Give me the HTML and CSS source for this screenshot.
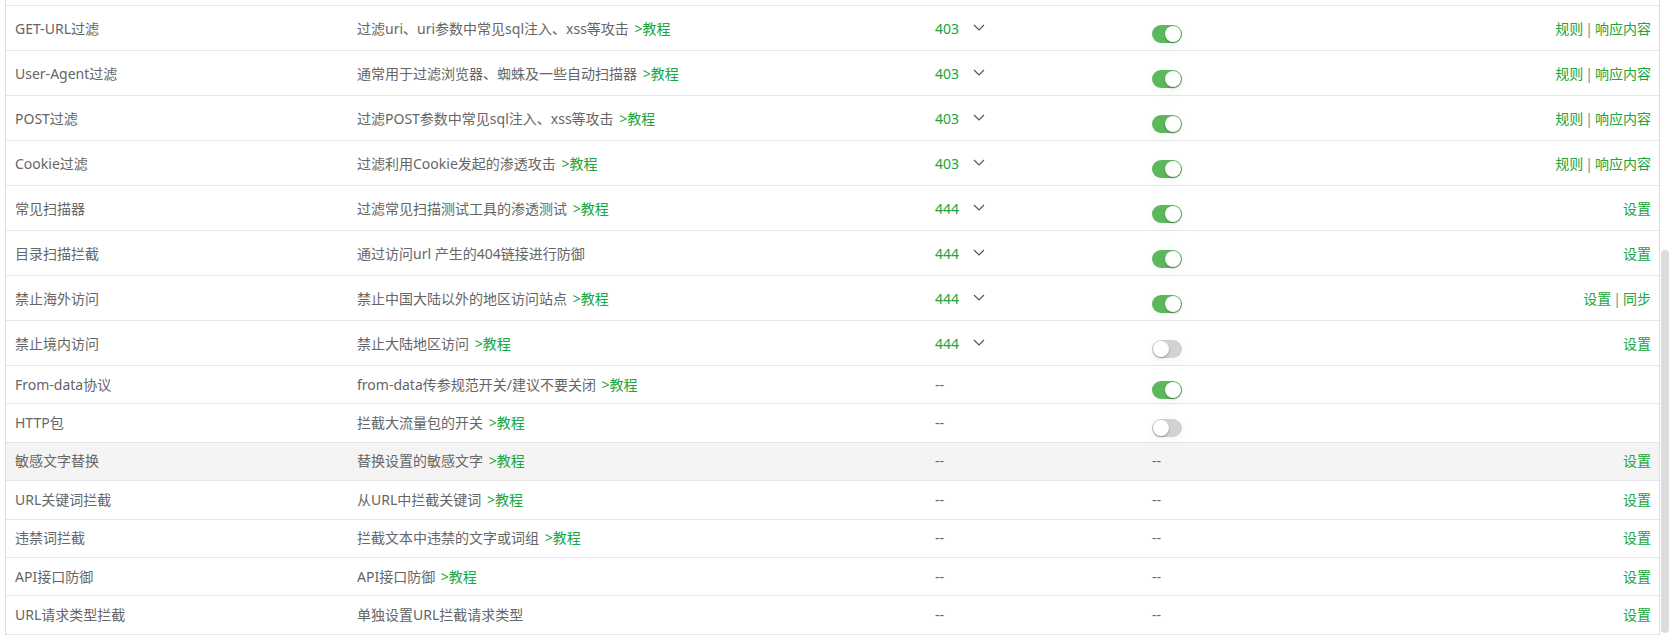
FILE: index.html
```html
<!DOCTYPE html>
<html lang="zh-CN">
<head>
  <meta charset="UTF-8">
  <title>网站防火墙 - 全局配置</title>
  <link rel="stylesheet" href="styles.css">
</head>
<body>
  <div class="page">
    <div class="table">
      <div class="row stub"></div>

      <div class="row tall">
        <div class="cell name">GET-URL过滤</div>
        <div class="cell desc">过滤uri、uri参数中常见sql注入、xss等攻击 <a class="btlink">&gt;教程</a></div>
        <div class="cell code"><span class="status">403</span><svg class="caret" viewBox="0 0 12 7" width="12" height="7"><polyline points="1,1 6,6 11,1"/></svg></div>
        <div class="cell state"><span class="switch on"></span></div>
        <div class="cell ops"><a class="btlink">规则</a><span class="sep">|</span><a class="btlink">响应内容</a></div>
      </div>

      <div class="row tall">
        <div class="cell name">User-Agent过滤</div>
        <div class="cell desc">通常用于过滤浏览器、蜘蛛及一些自动扫描器 <a class="btlink">&gt;教程</a></div>
        <div class="cell code"><span class="status">403</span><svg class="caret" viewBox="0 0 12 7" width="12" height="7"><polyline points="1,1 6,6 11,1"/></svg></div>
        <div class="cell state"><span class="switch on"></span></div>
        <div class="cell ops"><a class="btlink">规则</a><span class="sep">|</span><a class="btlink">响应内容</a></div>
      </div>

      <div class="row tall">
        <div class="cell name">POST过滤</div>
        <div class="cell desc">过滤POST参数中常见sql注入、xss等攻击 <a class="btlink">&gt;教程</a></div>
        <div class="cell code"><span class="status">403</span><svg class="caret" viewBox="0 0 12 7" width="12" height="7"><polyline points="1,1 6,6 11,1"/></svg></div>
        <div class="cell state"><span class="switch on"></span></div>
        <div class="cell ops"><a class="btlink">规则</a><span class="sep">|</span><a class="btlink">响应内容</a></div>
      </div>

      <div class="row tall">
        <div class="cell name">Cookie过滤</div>
        <div class="cell desc">过滤利用Cookie发起的渗透攻击 <a class="btlink">&gt;教程</a></div>
        <div class="cell code"><span class="status">403</span><svg class="caret" viewBox="0 0 12 7" width="12" height="7"><polyline points="1,1 6,6 11,1"/></svg></div>
        <div class="cell state"><span class="switch on"></span></div>
        <div class="cell ops"><a class="btlink">规则</a><span class="sep">|</span><a class="btlink">响应内容</a></div>
      </div>

      <div class="row tall">
        <div class="cell name">常见扫描器</div>
        <div class="cell desc">过滤常见扫描测试工具的渗透测试 <a class="btlink">&gt;教程</a></div>
        <div class="cell code"><span class="status">444</span><svg class="caret" viewBox="0 0 12 7" width="12" height="7"><polyline points="1,1 6,6 11,1"/></svg></div>
        <div class="cell state"><span class="switch on"></span></div>
        <div class="cell ops"><a class="btlink">设置</a></div>
      </div>

      <div class="row tall">
        <div class="cell name">目录扫描拦截</div>
        <div class="cell desc">通过访问url 产生的404链接进行防御</div>
        <div class="cell code"><span class="status">444</span><svg class="caret" viewBox="0 0 12 7" width="12" height="7"><polyline points="1,1 6,6 11,1"/></svg></div>
        <div class="cell state"><span class="switch on"></span></div>
        <div class="cell ops"><a class="btlink">设置</a></div>
      </div>

      <div class="row tall">
        <div class="cell name">禁止海外访问</div>
        <div class="cell desc">禁止中国大陆以外的地区访问站点 <a class="btlink">&gt;教程</a></div>
        <div class="cell code"><span class="status">444</span><svg class="caret" viewBox="0 0 12 7" width="12" height="7"><polyline points="1,1 6,6 11,1"/></svg></div>
        <div class="cell state"><span class="switch on"></span></div>
        <div class="cell ops"><a class="btlink">设置</a><span class="sep">|</span><a class="btlink">同步</a></div>
      </div>

      <div class="row tall">
        <div class="cell name">禁止境内访问</div>
        <div class="cell desc">禁止大陆地区访问 <a class="btlink">&gt;教程</a></div>
        <div class="cell code"><span class="status">444</span><svg class="caret" viewBox="0 0 12 7" width="12" height="7"><polyline points="1,1 6,6 11,1"/></svg></div>
        <div class="cell state"><span class="switch"></span></div>
        <div class="cell ops"><a class="btlink">设置</a></div>
      </div>

      <div class="row">
        <div class="cell name">From-data协议</div>
        <div class="cell desc">from-data传参规范开关/建议不要关闭 <a class="btlink">&gt;教程</a></div>
        <div class="cell code">--</div>
        <div class="cell state"><span class="switch on"></span></div>
        <div class="cell ops"></div>
      </div>

      <div class="row">
        <div class="cell name">HTTP包</div>
        <div class="cell desc">拦截大流量包的开关 <a class="btlink">&gt;教程</a></div>
        <div class="cell code">--</div>
        <div class="cell state"><span class="switch"></span></div>
        <div class="cell ops"></div>
      </div>

      <div class="row hover">
        <div class="cell name">敏感文字替换</div>
        <div class="cell desc">替换设置的敏感文字 <a class="btlink">&gt;教程</a></div>
        <div class="cell code">--</div>
        <div class="cell state">--</div>
        <div class="cell ops"><a class="btlink">设置</a></div>
      </div>

      <div class="row">
        <div class="cell name">URL关键词拦截</div>
        <div class="cell desc">从URL中拦截关键词 <a class="btlink">&gt;教程</a></div>
        <div class="cell code">--</div>
        <div class="cell state">--</div>
        <div class="cell ops"><a class="btlink">设置</a></div>
      </div>

      <div class="row">
        <div class="cell name">违禁词拦截</div>
        <div class="cell desc">拦截文本中违禁的文字或词组 <a class="btlink">&gt;教程</a></div>
        <div class="cell code">--</div>
        <div class="cell state">--</div>
        <div class="cell ops"><a class="btlink">设置</a></div>
      </div>

      <div class="row">
        <div class="cell name">API接口防御</div>
        <div class="cell desc">API接口防御 <a class="btlink">&gt;教程</a></div>
        <div class="cell code">--</div>
        <div class="cell state">--</div>
        <div class="cell ops"><a class="btlink">设置</a></div>
      </div>

      <div class="row">
        <div class="cell name">URL请求类型拦截</div>
        <div class="cell desc">单独设置URL拦截请求类型</div>
        <div class="cell code">--</div>
        <div class="cell state">--</div>
        <div class="cell ops"><a class="btlink">设置</a></div>
      </div>
    </div>

    <div class="scrollbar">
      <div class="thumb"></div>
    </div>
  </div>
</body>
</html>
```

FILE: styles.css
```css
html, body {
  margin: 0;
  padding: 0;
  background: #fff;
  overflow: hidden;
}

body {
  font-family: "Noto Sans", "Noto Sans CJK SC", sans-serif;
  font-size: 14px;
  line-height: 20px;
  color: #666;
}

.page {
  display: flex;
  align-items: flex-start;
  padding-left: 5px;
  height: 643px;
}

.table {
  width: 1655px;
  box-sizing: border-box;
  border-left: 1px solid #ddd;
  border-right: 1px solid #ddd;
}

.row {
  display: grid;
  grid-template-columns: 341px 578px 217px 258px 1fr;
  align-items: center;
  height: 38.4px;
  box-sizing: border-box;
  border-bottom: 1px solid #e6e6e6;
}

.row.stub {
  height: 6px;
}

.row.tall {
  height: 45px;
  padding-top: 1px;
}

.row.hover {
  background: #f4f4f4;
}

.cell {
  padding-left: 10px;
  white-space: nowrap;
}

.cell.name {
  padding-left: 9px;
}

.cell.desc .btlink {
  margin-left: 2px;
}

.cell.code {
  display: flex;
  align-items: center;
}

.cell.ops {
  text-align: right;
  padding-right: 8px;
}

.sep {
  margin: 0 2px;
  color: #888;
}

.btlink {
  color: #20a53a;
  text-decoration: none;
  cursor: pointer;
}

.status {
  color: #20a53a;
}

.caret {
  margin-left: 14px;
  margin-top: -3px;
}

.caret polyline {
  fill: none;
  stroke: #555;
  stroke-width: 1.2;
}

.switch {
  display: block;
  position: relative;
  width: 30px;
  height: 18px;
  margin-top: 10px;
  border-radius: 9px;
  background: #d2d2d2;
  box-shadow: 0 3px 12px rgba(0, 0, 0, 0.04);
}

.switch::after {
  content: "";
  position: absolute;
  top: 1px;
  left: 1px;
  width: 16px;
  height: 16px;
  border-radius: 50%;
  background: #fff;
  box-shadow: 0 1px 2px rgba(0, 0, 0, 0.35);
}

.switch.on {
  background: #5cb85c;
}

.switch.on::after {
  left: 13px;
}

.scrollbar {
  width: 16px;
  height: 643px;
}

.thumb {
  width: 8px;
  height: 383px;
  margin-top: 250px;
  margin-left: 1px;
  border-radius: 4px;
  background: #dcdcdc;
}
```
